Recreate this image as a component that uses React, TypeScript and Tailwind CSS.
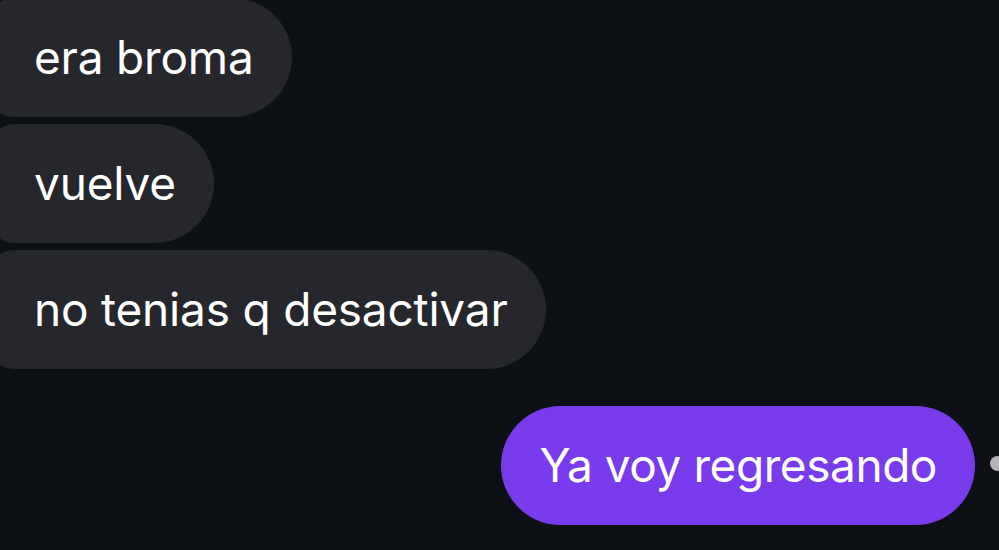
import React from "react";

function Left({ text }: { text: string }) {
  return (
    <div className="flex">
      <div className="-ml-[10px] h-[119px] flex items-center pl-[44px] pr-[38px] bg-[#25272c] rounded-l-[24px] rounded-r-[60px] text-white text-[46px] tracking-[-0.2px]">
        {text}
      </div>
    </div>
  );
}

export default function App() {
  return (
    <div
      className="w-[999px] h-[550px] overflow-hidden bg-[#0d1014] flex flex-col"
      style={{ fontFamily: "Inter, 'Noto Sans', sans-serif" }}
    >
      <div className="-mt-[2px] flex flex-col gap-[7px]">
        <Left text="era broma" />
        <Left text="vuelve" />
        <Left text="no tenias q desactivar" />
      </div>
      <div className="mt-[37px] flex justify-end items-center -mr-[6px]">
        <div className="h-[119px] flex items-center px-[38px] bg-[#7a3bec] rounded-[60px] text-white text-[46px] tracking-[-0.45px]">
          Ya voy regresando
        </div>
        <div className="ml-[15px] -mt-[4px] w-[15px] h-[15px] rounded-full bg-[#b4b6bb]" />
      </div>
    </div>
  );
}
